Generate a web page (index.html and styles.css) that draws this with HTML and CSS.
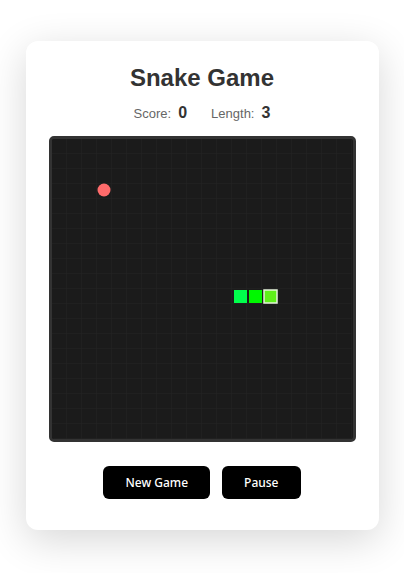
FILE: index.html
```html
<!DOCTYPE html>
<html lang="en">
<head>
<meta charset="utf-8">
<title>Snake Game</title>
<link rel="stylesheet" href="styles.css">
</head>
<body>
<main class="card">
  <h1 class="title">Snake Game</h1>
  <div class="stats">
    <span class="stat"><span class="label">Score:</span><span class="value">0</span></span>
    <span class="stat"><span class="label">Length:</span><span class="value">3</span></span>
  </div>
  <div class="board">
    <svg class="grid" width="300" height="300" viewBox="0 0 300 300" xmlns="http://www.w3.org/2000/svg">
      <defs>
        <pattern id="cells" width="15" height="15" patternUnits="userSpaceOnUse">
          <path d="M15 0 V15 H0" fill="none" stroke="#242424" stroke-width="1"/>
        </pattern>
      </defs>
      <rect width="300" height="300" fill="#1b1b1b"/>
      <rect width="300" height="300" fill="url(#cells)"/>
      <circle cx="52" cy="51" r="6.5" fill="#ff6b6b"/>
      <rect x="182" y="151" width="13" height="13" fill="#00ff4c"/>
      <rect x="197" y="151" width="13" height="13" fill="#00f800"/>
      <rect x="212" y="151" width="13" height="13" fill="#5ff01a" stroke="#e6f5dc" stroke-width="1.5"/>
    </svg>
  </div>
  <div class="controls">
    <button class="btn btn-new">New Game</button>
    <button class="btn btn-pause">Pause</button>
  </div>
</main>
</body>
</html>
```
FILE: styles.css
```css
html, body {
  margin: 0;
  padding: 0;
}
body {
  min-height: 100vh;
  display: flex;
  align-items: center;
  justify-content: center;
  background: #ffffff;
  font-family: "Liberation Sans", Arial, sans-serif;
}
.card {
  background: #ffffff;
  border-radius: 12px;
  box-shadow: 0 10px 40px rgba(0, 0, 0, 0.16);
  padding: 22px 23px 31px;
  margin-bottom: 3px;
  display: flex;
  flex-direction: column;
  align-items: center;
}
.title {
  margin: 0;
  font-size: 24px;
  line-height: 30px;
  font-weight: bold;
  color: #333333;
}
.stats {
  margin-top: 9px;
  display: flex;
  gap: 24px;
  height: 22px;
  align-items: center;
}
.stat {
  display: flex;
  align-items: baseline;
  gap: 7px;
}
.label {
  font-size: 13px;
  color: #666666;
}
.value {
  font-size: 16px;
  font-weight: bold;
  color: #333333;
}
.board {
  margin-top: 12px;
  border: 3px solid #333333;
  border-radius: 5px;
  width: 301px;
  height: 300px;
  overflow: hidden;
  background: #1b1b1b;
}
.grid {
  display: block;
}
.controls {
  margin-top: 24px;
  display: flex;
  gap: 12px;
}
.btn {
  background: #000000;
  color: #ffffff;
  border: none;
  border-radius: 6px;
  height: 33px;
  padding: 0 22px;
  font-family: "Noto Sans", "Open Sans", sans-serif;
  font-size: 12px;
  font-weight: 500;
  cursor: pointer;
}
```
